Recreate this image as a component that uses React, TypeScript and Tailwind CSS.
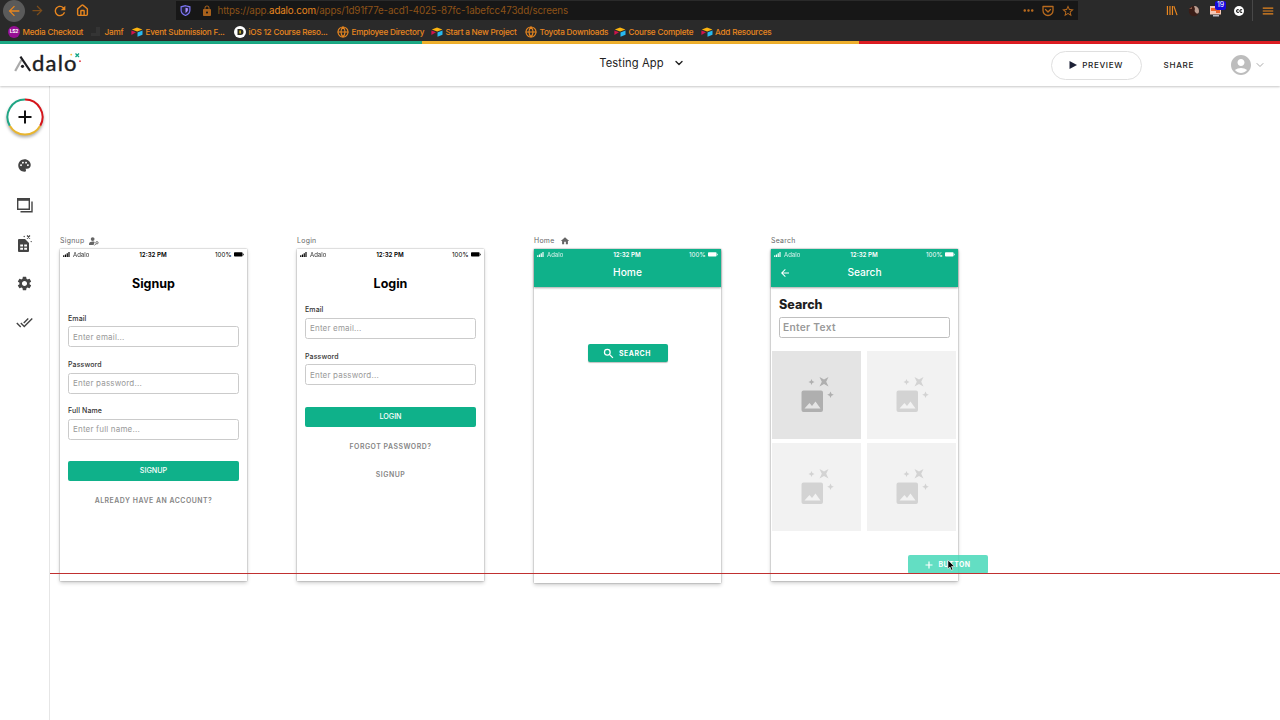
import type { ReactNode } from "react";
import clsx from "clsx";
import {
  MdArrowBack,
  MdArrowForward,
  MdRefresh,
  MdLock,
  MdPalette,
  MdSettings,
  MdDoneAll,
  MdHome,
  MdStarBorder,
  MdMoreHoriz,
  MdAccountCircle,
  MdMenu,
} from "react-icons/md";
import { ChevronDown, Globe, House } from "lucide-react";

interface Bookmark {
  label: string;
  icon: "ls" | "jamf" | "box" | "ios" | "globe";
  width: string;
}

const bookmarks: Bookmark[] = [
  { label: "Media Checkout", icon: "ls", width: "w-[82px]" },
  { label: "Jamf", icon: "jamf", width: "w-[41px]" },
  { label: "Event Submission F...", icon: "box", width: "w-[103px]" },
  { label: "iOS 12 Course Reso...", icon: "ios", width: "w-[103px]" },
  { label: "Employee Directory", icon: "globe", width: "w-[94px]" },
  { label: "Start a New Project", icon: "box", width: "w-[94px]" },
  { label: "Toyota Downloads", icon: "globe", width: "w-[89px]" },
  { label: "Course Complete", icon: "box", width: "w-[86.5px]" },
  { label: "Add Resources", icon: "box", width: "w-[80px]" },
];

const BookmarkIcon = ({ icon }: { icon: Bookmark["icon"] }) => {
  switch (icon) {
    case "ls":
      return (
        <span className="flex h-3 w-3 items-center justify-center rounded-full bg-[#970f94] text-[5px] font-bold text-white">
          LS2
        </span>
      );
    case "jamf":
      return (
        <svg viewBox="0 0 12 12" className="h-3 w-3">
          <path d="M1 7h5V1h4v9H1z" fill="#343434" />
        </svg>
      );
    case "box":
      return (
        <svg viewBox="0 0 12 12" className="h-3 w-3">
          <path d="M0.8 3.6 6 1.4l5.4 2.2L6.2 5.6z" fill="#fcb40f" />
          <path d="M0.4 4.6 5 6.3 0.4 9z" fill="#d0144c" />
          <path d="M6.5 6.5 11.5 4.6v4.2L6.5 10.8z" fill="#27b9f0" />
        </svg>
      );
    case "ios":
      return (
        <span className="flex h-3 w-3 items-center justify-center rounded-full bg-white">
          <svg viewBox="0 0 8 8" className="h-2 w-2">
            <path d="M1.5 1h3a2.5 2.5 0 0 1 0 6h-3z" fill="#2b2b22" />
            <path d="M3.4 2.6h1.4v2.8H3.4z" fill="#e9cf30" />
          </svg>
        </span>
      );
    default:
      return <Globe className="h-3 w-3 text-[#e8861f]" strokeWidth={2.3} />;
  }
};

const Browser = () => (
  <div className="h-[41px] bg-[#2a2a2a] text-[#e8861f]">
    <div className="flex h-[21px] items-center">
      <div className="ml-[3px] flex h-[22px] w-[22px] shrink-0 items-center justify-center rounded-full bg-[#5a5a5a]">
        <MdArrowBack className="h-4 w-4" />
      </div>
      <MdArrowForward className="ml-[5px] h-[15px] w-[15px] text-[#7d4d1b]" />
      <MdRefresh className="ml-[7px] h-[16px] w-[16px]" />
      <House className="ml-[8px] h-[13px] w-[13px]" strokeWidth={2.6} />
      <div className="ml-[87px] flex h-[19px] w-[902px] items-center bg-[#171717]">
        <svg viewBox="0 0 12 12" className="ml-1 h-[11px] w-[11px]">
          <path d="M6 .8 10.8 2v3.6c0 2.8-2 4.7-4.8 5.8C3.2 10.3 1.2 8.4 1.2 5.6V2z" fill="#20213c" stroke="#7d75f5" strokeWidth="1.3" />
          <path d="M6 3v5.8c1.7-.8 2.6-2 2.6-3.5V3.5z" fill="#a98cff" />
        </svg>
        <MdLock className="ml-[9.5px] h-[12px] w-[12px] text-[#a8611c]" />
        <span className="ml-[5px] w-[352px] whitespace-nowrap pt-[2px] text-[9.8px] tracking-[-0.15px] text-[#8c5218]">
          https://app.<span className="text-[#e8861f]">adalo.com</span>
          /apps/1d91f77e-acd1-4025-87fc-1abefcc473dd/screens
        </span>
        <div className="ml-auto flex items-center text-[#b86a1e]">
          <MdMoreHoriz className="mr-[6px] h-[15px] w-[15px]" />
          <svg viewBox="0 0 24 24" className="mr-[7px] h-[12px] w-[12px]" fill="none" stroke="currentColor" strokeWidth="2.6" strokeLinecap="round" strokeLinejoin="round">
            <path d="M2 3h20v8a10 10 0 0 1-20 0z" />
            <path d="m7 9 5 5 5-5" />
          </svg>
          <MdStarBorder className="mr-[3px] h-[14px] w-[14px]" />
        </div>
      </div>
      <svg viewBox="0 0 12 12" className="ml-[88px] h-[11px] w-[12px]" fill="none" stroke="currentColor" strokeWidth="1.3">
        <path d="M1 1v10M3.8 1v10M6.5 1v10M8 1.2l3.5 9.8" />
      </svg>
      <svg viewBox="0 0 12 12" className="ml-[10px] h-[12px] w-[12px]">
        <circle cx="6" cy="6" r="5.2" fill="#3a1d17" />
        <path d="M6 1c3 0 5 2 5 5S9 9 8 8 6 6 7 4z" fill="#b99d91" />
        <path d="M1 4l3-2v2z" fill="#8c5a48" />
      </svg>
      <div className="relative ml-[10px] h-[12px] w-[12px]">
        <svg viewBox="0 0 12 12" className="h-full w-full">
          <path d="M0 1h11v8.500H0z" fill="#f4c7b5" />
          <path d="M1 3h5v3H1zM6 5h4v3H6z" fill="#e8632c" />
          <path d="M3 10h6v1.500H3z" fill="#b9b9c4" />
        </svg>
        <span className="absolute -right-[4px] -top-[4px] flex h-[9px] w-[11px] items-center justify-center rounded-[2px] bg-[#1608dc] text-[7px] text-white">
          19
        </span>
      </div>
      <span className="ml-[12px] flex h-[10px] w-[10px] items-center justify-center rounded-full bg-white">
        <svg viewBox="0 0 10 10" className="h-[10px] w-[10px]" fill="none" stroke="#222" strokeWidth="1.2">
          <path d="M4.700 4a1.300 1.300 0 1 0 0 2M8 4a1.300 1.300 0 1 0 0 2" />
        </svg>
      </span>
      <span className="ml-2 h-[21px] w-px bg-[#484848]" />
      <MdMenu className="ml-[8px] h-[14px] w-[14px]" />
    </div>
    <div className="flex h-5 items-center pl-2 pt-[2px] text-[8.2px] font-medium tracking-[-0.22px]">
      {bookmarks.map((b) => (
        <div key={b.label} className={clsx("flex shrink-0 items-center gap-[2.5px] whitespace-nowrap", b.width)}>
          <BookmarkIcon icon={b.icon} />
          <span>{b.label}</span>
        </div>
      ))}
    </div>
  </div>
);

const Logo = () => (
  <div className="relative ml-[14px] flex h-[20px] w-[68px] items-center">
    <svg viewBox="0 0 18 20" className="h-5 w-[18px] shrink-0" fill="none">
      <path d="M1.2 18 7.400 7" stroke="#aaaaaa" strokeWidth="2.2" />
      <path d="M6.4 3.6 16.2 18" stroke="#1d1d22" strokeWidth="2.2" />
      <circle cx="8.5" cy="13.3" r="1.6" fill="#1d1d22" />
    </svg>
    <span className="font-[Lato] text-[22px] leading-5 tracking-[1.2px] text-[#1d1d22] [-webkit-text-stroke:0.4px_#1d1d22]">dalo</span>
    <svg viewBox="0 0 12 12" className="absolute -top-[1px] right-0 h-[12px] w-[12px]">
      <path d="m5.500 1.500 3.500 3.500M9 1.500 5.500 5" stroke="#13a585" strokeWidth="1.3" />
      <circle cx="1.200" cy="2.600" r=".9" fill="#f5b73c" />
      <circle cx="10" cy="9.200" r=".9" fill="#df3540" />
    </svg>
  </div>
);

const Header = () => (
  <header className="relative z-10 grid h-[42px] grid-cols-3 items-center bg-white shadow-[0_1px_2px_rgba(0,0,0,0.22)]">
    <div className="pb-1">
      <Logo />
    </div>
    <div className="flex items-center justify-center gap-[9px] pb-[3px] pl-[4px] text-[11.2px] tracking-[0.12px] text-[#222]">
      Testing App
      <ChevronDown className="h-[12px] w-[12px]" strokeWidth={2.8} />
    </div>
    <div className="flex items-center justify-end pr-[14px] text-[8.1px] font-medium tracking-[0.65px] text-[#1c1c22]">
      <div className="mr-[22px] flex h-[29px] w-[91px] items-center justify-center gap-[5px] rounded-full border border-[#dfdfdf]">
        <svg viewBox="0 0 8 8" className="h-2 w-2">
          <path d="M.5 0 8 4 .5 8z" fill="#1c2036" />
        </svg>
        PREVIEW
      </div>
      SHARE
      <MdAccountCircle className="ml-[35px] h-[24px] w-[24px] text-[#bdbdbd]" />
      <ChevronDown className="ml-[1px] h-[12px] w-[12px] text-[#aaa]" />
    </div>
  </header>
);

const Sidebar = () => (
  <aside className="flex w-[50px] shrink-0 flex-col items-center border-r border-[#e6e6e6] bg-white pt-[12px] text-[#444]">
    <svg viewBox="0 0 38 38" className="h-[38px] w-[38px] drop-shadow-[0_2px_1.5px_rgba(0,0,0,0.3)]" fill="none" strokeWidth="2">
      <circle cx="19" cy="19" r="18" fill="#fff" />
      <path d="M19 1.500A17.500 17.500 0 0 1 34.200 27.700" stroke="#d5151b" />
      <path d="M34.200 27.700a17.500 17.500 0 0 1-30.400 0" stroke="#e8b52f" />
      <path d="M3.800 27.700A17.500 17.500 0 0 1 19 1.500" stroke="#1fa584" />
      <path d="M19 12.500v13M12.500 19h13" stroke="#111" />
    </svg>
    <MdPalette className="mt-[22px] h-[15px] w-[15px]" />
    <svg viewBox="0 0 18 18" className="mt-[22.5px] h-[18px] w-[18px]" fill="none" stroke="currentColor" strokeWidth="1.4">
      <path d="M1.700 2.700h11.600v10.600H1.700z" />
      <path d="M1.700 3.600h11.600" strokeWidth="2.4" />
      <path d="M16 5.500v10.300H4.500" />
    </svg>
    <svg viewBox="0 0 18 20" className="mt-[20.5px] h-[20px] w-[18px]" fill="currentColor">
      <path fillRule="evenodd" d="M3 5h6l4 4v8a1 1 0 0 1-1 1H3a1 1 0 0 1-1-1V6a1 1 0 0 1 1-1zm1.200 5.500v2H7v-2zm4 0v2H11v-2zm-4 3.300v2H7v-2zm4 0v2H11v-2z" />
      <path d="m11 1.500 3 3m0-3-3 3" stroke="currentColor" strokeWidth="1.1" />
      <circle cx="8.200" cy="2.500" r=".7" />
      <circle cx="15.200" cy="7.600" r=".7" />
    </svg>
    <MdSettings className="mt-[21px] h-[17px] w-[17px]" />
    <MdDoneAll className="mt-[22px] h-[17px] w-[17px]" />
  </aside>
);

const StatusBar = ({ light }: { light?: boolean }) => (
  <div className={clsx("grid h-[10.5px] grid-cols-3 items-center px-[3px] text-[6.2px]", light ? "text-white" : "text-black")}>
    <div className="flex items-center gap-[3px]">
      <svg viewBox="0 0 8 6" className="h-[5px] w-[7px]" fill="currentColor">
        <path d="M0 4h1.400v2H0zM2.100 3h1.400v3H2.100zM4.200 1.500h1.400V6H4.200zM6.300 0h1.400v6H6.300z" />
      </svg>
      <span className="text-[6px] opacity-85">Adalo</span>
    </div>
    <span className="-ml-[1px] text-center font-semibold">12:32 PM</span>
    <div className="-mr-[1px] flex items-center justify-end gap-[1.5px]">
      <span>100%</span>
      <svg viewBox="0 0 12 6" className="h-[5px] w-[12px]" fill="currentColor">
        <rect y=".3" width="10.3" height="5.2" rx="1" />
        <path d="M10.900 2h.8v2h-.8z" />
      </svg>
    </div>
  </div>
);

interface ScreenProps {
  name: string;
  position: string;
  height?: string;
  icon?: ReactNode;
  children: ReactNode;
}

const Screen = ({ name, position, height = "h-[332px]", icon, children }: ScreenProps) => (
  <section className={clsx("absolute top-[148px] w-[187px]", position)}>
    <div className="flex h-[15px] items-center gap-[5px] pb-[1px] text-[6.9px] tracking-[0.3px] text-[#666]">
      {name}
      {icon}
    </div>
    <div className={clsx("bg-white shadow-[0_0_1.5px_rgba(0,0,0,0.4),0_2px_4px_rgba(0,0,0,0.2)]", height)}>{children}</div>
  </section>
);

const Field = ({ label, placeholder }: { label: string; placeholder: string }) => (
  <div className="mb-[11.8px]">
    <p className="h-[13.5px] text-[7px] font-medium leading-[11px] tracking-[0.1px] text-[#333]">{label}</p>
    <div className="flex h-[21px] items-center rounded-[2.5px] border border-[#cbcbcb] pl-[4px] text-[8px] tracking-[0.18px] text-[#999]">
      {placeholder}
    </div>
  </div>
);

const SubmitButton = ({ children }: { children: string }) => (
  <div className="mt-[21.5px] flex h-[20px] items-center justify-center rounded-[2px] bg-[#0fb18a] pt-[1px] text-[7.2px] font-medium text-white">
    {children}
  </div>
);

const TextLink = ({ children }: { children: string }) => (
  <p className="h-[28px] text-center text-[6.9px] font-semibold leading-[11px] tracking-[0.52px] text-[#858585]">{children}</p>
);

const AppBar = ({ title, back }: { title: string; back?: boolean }) => (
  <div className="h-[38px] bg-[#0fb18a] text-white shadow-[0_1px_2px_rgba(0,0,0,0.35)]">
    <StatusBar light />
    <div className="relative flex h-[27px] items-center justify-center text-[10.2px] font-medium">
      {back && <MdArrowBack className="absolute left-[8px] top-[7px] h-[12px] w-[12px]" />}
      {title}
    </div>
  </div>
);

const ImageTile = ({ active }: { active?: boolean }) => (
  <div className={clsx("flex items-center justify-center", active ? "bg-[#e4e4e4] text-[#afafaf]" : "bg-[#f2f2f2] text-[#d3d3d3]")}>
    <svg viewBox="0 0 34 36" className="ml-[4px] h-[36px] w-[34px]" fill="currentColor">
      <path fillRule="evenodd" d="M2.500 13.500h17.500a2 2 0 0 1 2 2v17.500a2 2 0 0 1-2 2H2.500a2 2 0 0 1-2-2V15.500a2 2 0 0 1 2-2zM3.500 31.500h16l-5-7-3.500 4.500-2.500-3z" />
      <path d="m18.500 0 4.500 2.500L27.500 0l-2.300 4.800 2.300 4.800-4.500-2.500-4.500 2.500 2.300-4.800z" />
      <path d="m10.500 2 .9 2.100 2.100.9-2.100.9-.9 2.100-.9-2.100L7.500 5l2.100-.9zM29.500 14.500l1 2.300 2.300 1-2.300 1-1 2.300-1-2.300-2.300-1 2.300-1z" />
    </svg>
  </div>
);

const Canvas = () => (
  <main className="relative flex-1 overflow-hidden bg-white">
    <Screen
      name="Signup"
      position="left-[10px]"
      icon={
        <svg viewBox="0 0 11 10" className="h-[9px] w-[10px]" fill="#666">
          <circle cx="4" cy="2.300" r="2.100" />
          <path d="M0 9V7.500C0 5.800 2.400 5 4 5c.8 0 1.600.2 2.300.5L5 9z" />
          <circle cx="8.800" cy="6.400" r="1.300" fill="none" stroke="#666" />
          <path d="m7.800 7.400-1.800 2" stroke="#666" />
        </svg>
      }
    >
      <StatusBar />
      <h2 className="pt-[15.5px] text-center text-[12.5px] font-bold leading-[18px] text-black">Signup</h2>
      <div className="px-[8px] pt-[19.8px]">
        <Field label="Email" placeholder="Enter email..." />
        <Field label="Password" placeholder="Enter password..." />
        <Field label="Full Name" placeholder="Enter full name..." />
        <SubmitButton>SIGNUP</SubmitButton>
        <div className="pt-[14px]">
          <TextLink>ALREADY HAVE AN ACCOUNT?</TextLink>
        </div>
      </div>
    </Screen>

    <Screen name="Login" position="left-[247px]">
      <StatusBar />
      <h2 className="pt-[15.5px] text-center text-[12.5px] font-bold leading-[18px] text-black">Login</h2>
      <div className="px-[8px] pt-[11.4px]">
        <Field label="Email" placeholder="Enter email..." />
        <Field label="Password" placeholder="Enter password..." />
        <SubmitButton>LOGIN</SubmitButton>
        <div className="pt-[14.5px]">
          <TextLink>FORGOT PASSWORD?</TextLink>
          <TextLink>SIGNUP</TextLink>
        </div>
      </div>
    </Screen>

    <Screen name="Home" position="left-[484px]" height="h-[334px]" icon={<MdHome className="h-[10px] w-[10px]" />}>
      <AppBar title="Home" />
      <div className="mx-auto mt-[57px] flex h-[18px] w-[80px] items-center justify-center gap-[5px] rounded-[2px] bg-[#0fb18a] text-[6.9px] font-bold tracking-[0.55px] text-white shadow-[0_1px_1px_rgba(0,0,0,0.25)]">
        <svg viewBox="0 0 12 12" className="-ml-[1px] h-[11px] w-[11px]" fill="none" stroke="currentColor" strokeWidth="1.4">
          <circle cx="4.700" cy="4.700" r="3.100" />
          <path d="m7 7 3.800 3.800" />
        </svg>
        <span className="pt-[2px]">SEARCH</span>
      </div>
    </Screen>

    <Screen name="Search" position="left-[721px]">
      <AppBar title="Search" back />
      <div className="px-[8px] pt-[9px]">
        <h2 className="text-[12.5px] font-extrabold leading-[17px] text-[#1f1f1f]">Search</h2>
        <div className="mt-[4px] flex h-[21px] items-center rounded-[2.5px] border border-[#bfbfbf] pl-[3px] pt-px text-[10.2px] font-semibold tracking-[0.3px] text-[#999]">
          Enter Text
        </div>
      </div>
      <div className="ml-[0.5px] mt-[13px] grid grid-cols-[89px_89px] grid-rows-[88px_88px] gap-x-[6px] gap-y-[4px]">
        <ImageTile active />
        <ImageTile />
        <ImageTile />
        <ImageTile />
      </div>
    </Screen>

    {/* button being dragged onto the canvas */}
    <div className="absolute left-[858px] top-[469px] flex h-[19px] w-[80px] items-center justify-center gap-[6px] rounded-[2px] bg-[#48d8b8]/85 pr-[1px] text-[6.9px] font-bold tracking-[0.45px] text-white">
      <svg viewBox="0 0 8 8" className="h-[8px] w-[8px]" fill="none" stroke="currentColor" strokeWidth="1.2">
        <path d="M4 .5v7M.5 4h7" />
      </svg>
      <span className="pt-[1px]">BUTTON</span>
    </div>
    <div className="absolute left-0 top-[487px] h-px w-full bg-[#c03030]" />
    <svg viewBox="0 0 10 14" className="absolute left-[897px] top-[473px] h-[13px] w-[9px]">
      <path d="M1 1v9.800l2.300-2.100 1.500 3.600 1.800-.8-1.500-3.500h3.300z" fill="#000" stroke="#fff" strokeWidth=".7" />
    </svg>
  </main>
);

const App = () => (
  <div className="flex h-[720px] w-[1280px] flex-col overflow-hidden bg-white font-[Inter,sans-serif]">
    <Browser />
    <div className="flex h-[3px] shrink-0">
      <div className="w-[422px] bg-[#1ba984]" />
      <div className="w-[437px] bg-[#efb02c]" />
      <div className="flex-1 bg-[#dd1c22]" />
    </div>
    <Header />
    <div className="flex flex-1">
      <Sidebar />
      <Canvas />
    </div>
  </div>
);

export default App;
